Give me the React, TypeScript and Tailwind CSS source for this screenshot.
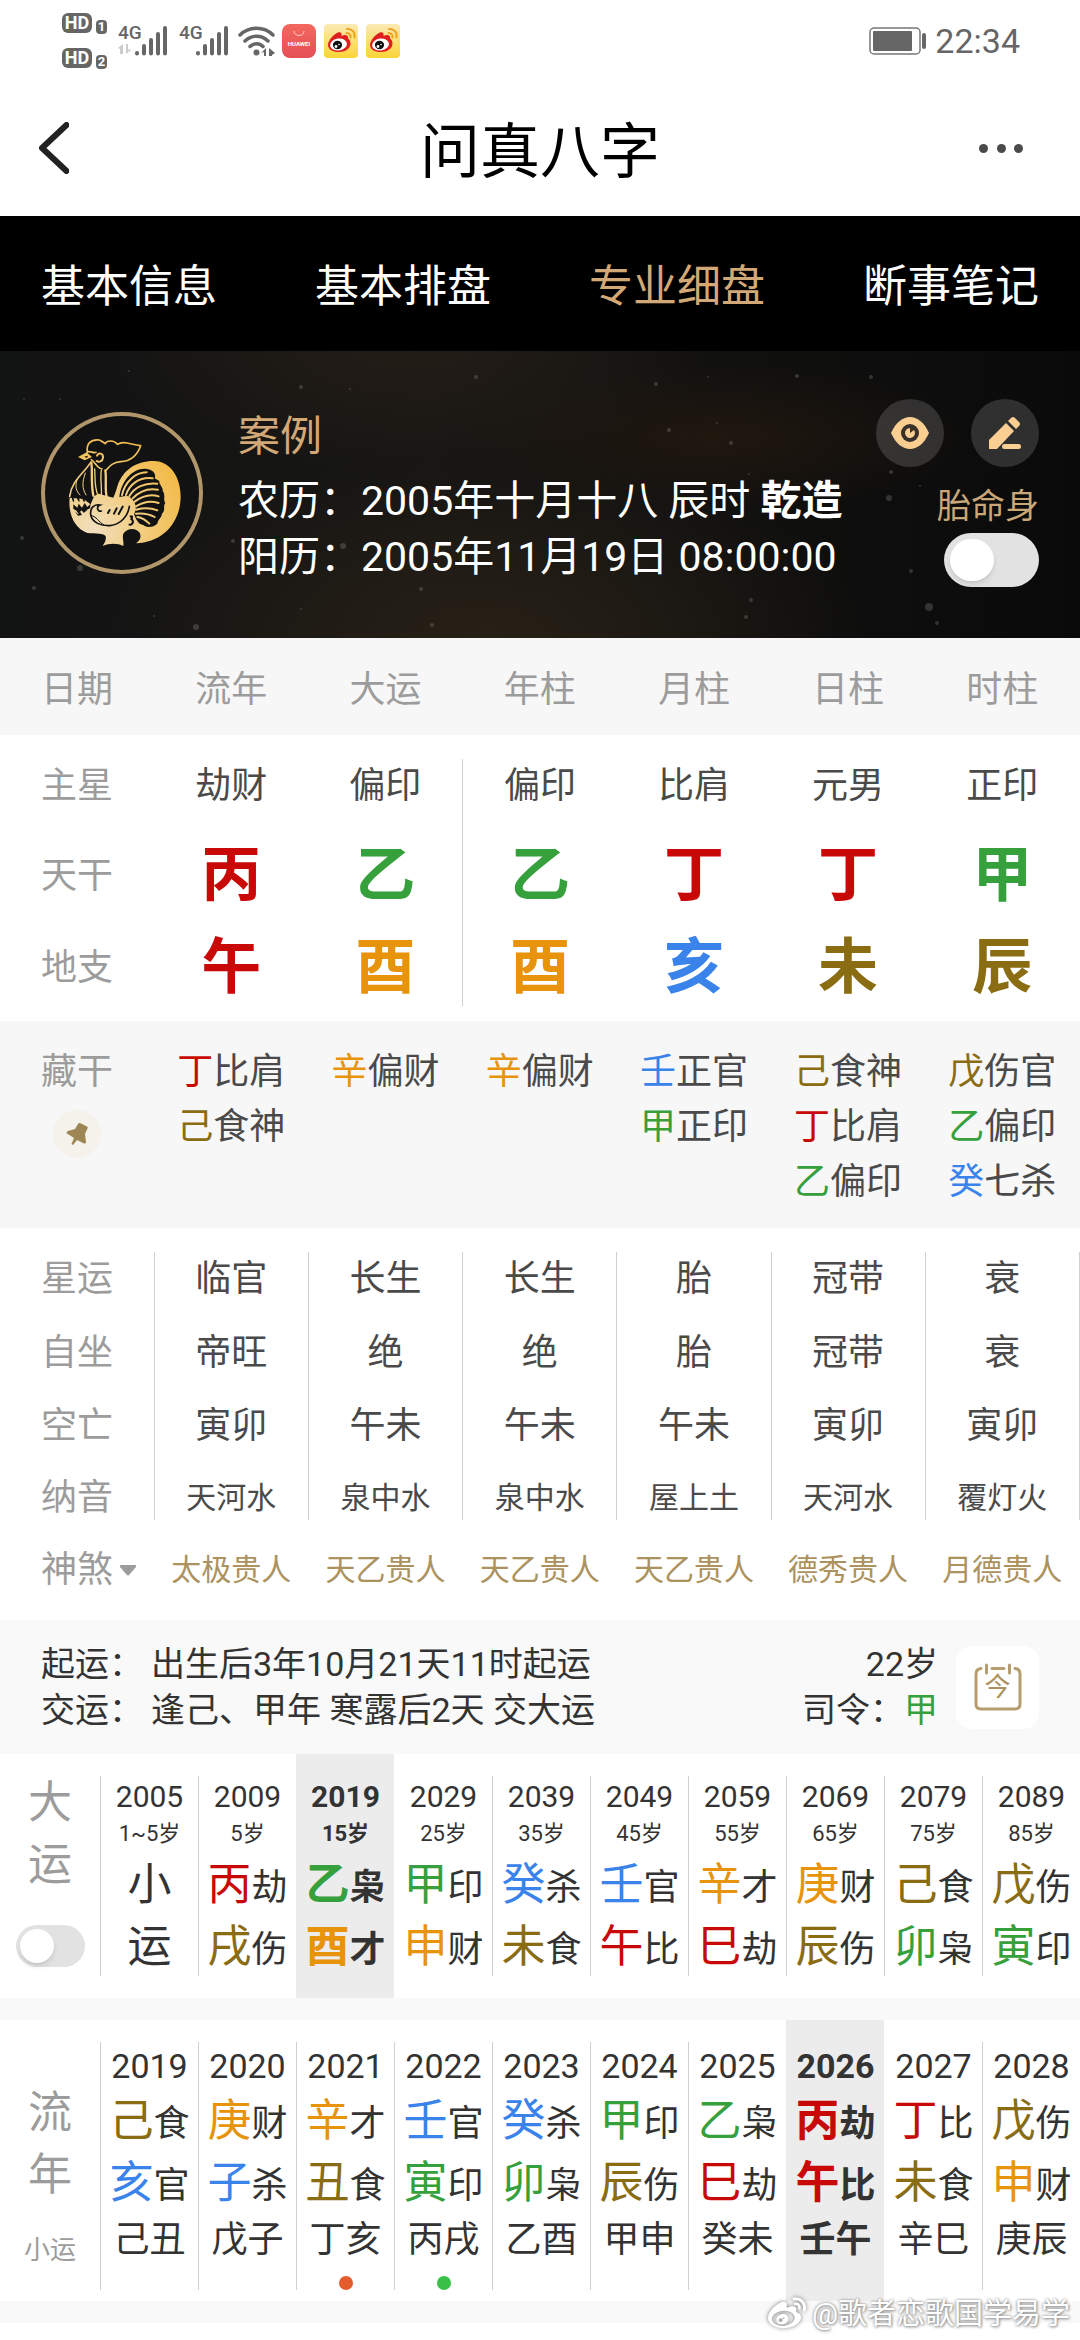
import React from "react";
import { FaWeibo } from "react-icons/fa";

const WOOD = "text-[#36a03c]";
const FIRE = "text-[#c90808]";
const EARTH = "text-[#8a6d12]";
const METAL = "text-[#e8930c]";
const WATER = "text-[#3a83ea]";

// stems and branches grouped by their element
const elements: [string, string][] = [
  ["甲乙寅卯", WOOD],
  ["丙丁巳午", FIRE],
  ["戊己辰戌丑未", EARTH],
  ["庚辛申酉", METAL],
  ["壬癸亥子", WATER],
];

const colorOf = (char: string) =>
  elements.find(([chars]) => chars.includes(char))?.[1] ?? "text-[#333333]";

const tabs = ["基本信息", "基本排盘", "专业细盘", "断事笔记"];

const pillars = [
  {
    name: "流年",
    star: "劫财",
    stem: "丙",
    branch: "午",
    hidden: ["丁比肩", "己食神"],
    fate: ["临官", "帝旺", "寅卯"],
    sound: "天河水",
    spirit: "太极贵人",
  },
  {
    name: "大运",
    star: "偏印",
    stem: "乙",
    branch: "酉",
    hidden: ["辛偏财"],
    fate: ["长生", "绝", "午未"],
    sound: "泉中水",
    spirit: "天乙贵人",
  },
  {
    name: "年柱",
    star: "偏印",
    stem: "乙",
    branch: "酉",
    hidden: ["辛偏财"],
    fate: ["长生", "绝", "午未"],
    sound: "泉中水",
    spirit: "天乙贵人",
  },
  {
    name: "月柱",
    star: "比肩",
    stem: "丁",
    branch: "亥",
    hidden: ["壬正官", "甲正印"],
    fate: ["胎", "胎", "午未"],
    sound: "屋上土",
    spirit: "天乙贵人",
  },
  {
    name: "日柱",
    star: "元男",
    stem: "丁",
    branch: "未",
    hidden: ["己食神", "丁比肩", "乙偏印"],
    fate: ["冠带", "冠带", "寅卯"],
    sound: "天河水",
    spirit: "德秀贵人",
  },
  {
    name: "时柱",
    star: "正印",
    stem: "甲",
    branch: "辰",
    hidden: ["戊伤官", "乙偏印", "癸七杀"],
    fate: ["衰", "衰", "寅卯"],
    sound: "覆灯火",
    spirit: "月德贵人",
  },
];

const decades = [
  { year: 2005, age: "1~5岁", top: "小", bottom: "运" },
  { year: 2009, age: "5岁", top: "丙劫", bottom: "戌伤" },
  { year: 2019, age: "15岁", top: "乙枭", bottom: "酉才", active: true },
  { year: 2029, age: "25岁", top: "甲印", bottom: "申财" },
  { year: 2039, age: "35岁", top: "癸杀", bottom: "未食" },
  { year: 2049, age: "45岁", top: "壬官", bottom: "午比" },
  { year: 2059, age: "55岁", top: "辛才", bottom: "巳劫" },
  { year: 2069, age: "65岁", top: "庚财", bottom: "辰伤" },
  { year: 2079, age: "75岁", top: "己食", bottom: "卯枭" },
  { year: 2089, age: "85岁", top: "戊伤", bottom: "寅印" },
];

const years = [
  { year: 2019, top: "己食", bottom: "亥官", minor: "己丑" },
  { year: 2020, top: "庚财", bottom: "子杀", minor: "戊子" },
  { year: 2021, top: "辛才", bottom: "丑食", minor: "丁亥", dot: "bg-[#e55c2c]" },
  { year: 2022, top: "壬官", bottom: "寅印", minor: "丙戌", dot: "bg-[#3abf48]" },
  { year: 2023, top: "癸杀", bottom: "卯枭", minor: "乙酉" },
  { year: 2024, top: "甲印", bottom: "辰伤", minor: "甲申" },
  { year: 2025, top: "乙枭", bottom: "巳劫", minor: "癸未" },
  { year: 2026, top: "丙劫", bottom: "午比", minor: "壬午", active: true },
  { year: 2027, top: "丁比", bottom: "未食", minor: "辛巳" },
  { year: 2028, top: "戊伤", bottom: "申财", minor: "庚辰" },
];

const Signal: React.FC<{ data?: boolean }> = ({ data }) => (
  <div className="relative h-8 w-[50px]">
    <span className="absolute left-0 top-0 text-[19px] leading-4 font-medium">4G</span>
    <svg viewBox="0 0 50 32" className="h-8 w-[50px]" fill="none" aria-hidden="true">
      <g stroke="#666666" strokeWidth="4" strokeLinecap="round">
        <path d="M19 28v.5M26 21v7.500M33 15v13.500M40 9v19.500M47 3v25.500" />
      </g>
      {data && <path d="M0 23l5-4v10H2v-5zM8 19v10l5-4-1-1-2 1v-6z" fill="#cccccc" />}
    </svg>
  </div>
);

const WeiboBadge: React.FC = () => (
  <svg viewBox="0 0 34 34" className="size-[34px]" aria-hidden="true">
    <defs>
      <linearGradient id="weibo-bg" x1="0" y1="0" x2="0" y2="1">
        <stop offset="0" stopColor="#fbeab4" />
        <stop offset="1" stopColor="#fbd536" />
      </linearGradient>
    </defs>
    <rect width="34" height="34" rx="4" fill="url(#weibo-bg)" />
    <path
      d="M4 21c0-5 6-11 10-12.500 3-1 4 1 3.500 3.500 3-1.500 7-1.500 6.500 2 0 1 2.500 1.500 2.500 5.500 0 5-5.500 8.500-11.500 8.500S4 25.500 4 21z"
      fill="#e01f1f"
    />
    <ellipse cx="14.500" cy="20.500" rx="8.500" ry="6" fill="#ffffff" transform="rotate(-8 14.500 20.500)" />
    <ellipse cx="13.500" cy="21" rx="4.600" ry="4.200" fill="#111111" />
    <circle cx="12" cy="22.500" r="1.400" fill="#ffffff" />
    <circle cx="15" cy="20.500" r=".8" fill="#ffffff" />
    <path
      d="M22.500 9c3 0 4.500 2 4 4.500M23 5c5-.5 8.500 3.500 7.500 8.500"
      fill="none"
      stroke="#eda223"
      strokeWidth="2"
      strokeLinecap="round"
    />
  </svg>
);

const StatusBar: React.FC = () => (
  <div className="flex h-20 items-start pl-[62px] pr-[60px] text-[#666666]">
    <div className="mt-[13px] flex flex-col gap-[15px]">
      {["1", "2"].map((sim) => (
        <div key={sim} className="flex h-5 items-start gap-1">
          <span className="w-[30px] rounded-md bg-[#666666] text-center text-[18px] leading-5 font-bold text-white">
            HD
          </span>
          <span className="mt-[7px] w-[11px] rounded-sm bg-[#666666] text-center text-[13px] leading-[14px] font-bold text-white">
            {sim}
          </span>
        </div>
      ))}
    </div>
    <div className="mt-6 ml-[11px] flex items-center">
      <div className="flex gap-[11px]">
        <Signal data />
        <Signal />
      </div>
      <svg viewBox="0 0 37 32" className="ml-[9px] h-8 w-[37px]" fill="none" aria-hidden="true">
        <g stroke="#666666" strokeWidth="3.500" strokeLinecap="round">
          <path d="M2 10C11 1 26 1 35 10M7 16c6.500-6.500 16.500-6.500 23 0M12 21.500c3.500-3.800 9.500-3.800 13 0" />
        </g>
        <circle cx="18.500" cy="27.500" r="3" fill="#666666" />
        <path d="M23 28l5-5v8h-2v-4zM31 23l6 5-3 2v1h-3z" fill="#666666" />
      </svg>
      <div className="ml-[7px] flex gap-2">
        <div className="flex size-[34px] flex-col items-center rounded-lg bg-linear-to-b from-[#f2685f] to-[#e44e55]">
          <svg viewBox="0 0 12 8" className="mt-1.5 h-2 w-3" fill="none" aria-hidden="true">
            <path d="M1 1c0 6 10 6 10 0" stroke="#ffc9c4" />
          </svg>
          <span className="mt-0.5 text-[6px] leading-[8px] font-bold text-white">HUAWEI</span>
        </div>
        <WeiboBadge />
        <WeiboBadge />
      </div>
    </div>
    <div className="mt-5 ml-auto flex items-center gap-2">
      <svg viewBox="0 0 58 28" className="h-7 w-[58px]" aria-hidden="true">
        <rect x="1" y="1" width="50" height="26" rx="4" fill="none" stroke="#777777" strokeWidth="1.500" />
        <rect x="4" y="4" width="39" height="20" rx="1" fill="#666666" />
        <rect x="53" y="6" width="4" height="16" rx="2" fill="#666666" />
      </svg>
      <span className="text-[34px] leading-[42px]">22:34</span>
    </div>
  </div>
);

const Rooster: React.FC = () => (
  <svg viewBox="33 39 486 486" className="size-[162px] shrink-0" fill="none" role="img" aria-label="鸡">
    <defs>
      <radialGradient id="gold" gradientUnits="userSpaceOnUse" cx="190" cy="390" r="290">
        <stop offset="0" stopColor="#f3dfc0" />
        <stop offset=".4" stopColor="#f1d08a" />
        <stop offset="1" stopColor="#f3bb49" />
      </radialGradient>
    </defs>
    <circle cx="276" cy="282" r="237" fill="#121212" stroke="#b0966a" strokeWidth="12" />
    {/* body and tail */}
    <path
      d="M119 296C114 345 133 388 172 402C198 405 222 402 227 412C230 424 222 434 218 441C238 432 262 432 280 441C282 428 276 414 280 404C290 388 315 384 328 400C336 414 330 424 318 433C395 430 452 375 452 290C450 222 412 186 372 186C315 186 280 215 264 256C258 275 256 284 250 296L228 290L206 284L192 292L182 316L160 300Z"
      fill="url(#gold)"
    />
    {/* comb and neck */}
    <g stroke="url(#gold)" strokeWidth="5" strokeLinejoin="round" strokeLinecap="round">
      <path d="M172 160C168 135 182 120 208 123C216 126 222 132 226 134C230 124 252 122 262 136C280 124 300 136 332 140C322 168 302 186 272 188C244 190 236 206 226 216" />
      <path d="M174 158C182 156 192 164 198 160M184 182C196 190 202 208 216 210" />
      <path d="M201 170C206 158 220 164 219 176C218 188 206 190 200 186" strokeWidth="6" />
      <path d="M182 190C160 225 125 245 119 292" />
      <path d="M184 190C188 220 182 250 190 290M226 214C230 240 224 266 230 294" strokeWidth="7" />
      <path d="M194 210C196 234 192 262 204 290M214 214C210 240 216 262 214 290" strokeWidth="4" />
      <path d="M142 240C134 262 138 276 150 288M166 222C156 250 156 268 168 288" strokeWidth="3" />
    </g>
    <path d="M144 174L170 160L186 174L164 184Z" fill="url(#gold)" />
    <path d="M162 173l12-3-3 7z" fill="#121212" />
    {/* breast scales */}
    <g fill="#121212">
      <path d="M126 290q8 8 6 20q-8-6-6-20zM142 288q8 8 6 22q-9-8-6-22zM158 290q8 6 6 20q-9-6-6-20zM174 288q8 8 6 20q-8-6-6-20z" />
      <path d="M130 316l12 10 4-12 10 12 8-14 8 12 10-10-2 14-12 6-6 8-8-8-8 10-8-10-8-4z" />
      <path d="M134 336l10 10 6-8 6 10-12 2zM162 334l10-4-4 8z" />
    </g>
    {/* wing */}
    <g stroke="#121212" strokeLinecap="round">
      <path
        d="M214 336C202 340 198 322 210 318C190 314 180 330 182 346C186 372 214 381 240 380C272 376 294 352 298 322"
        strokeWidth="5"
      />
      <path d="M234 342l5-9M252 344l8-16M266 345l12-22" strokeWidth="6" />
      <path d="M184 350C200 352 204 368 222 378" strokeWidth="3" />
    </g>
    {/* tail feathers */}
    <path
      d="M268 294C274 245 310 205 350 210C368 212 380 224 374 238L388 246C386 256 400 264 398 276C408 288 398 300 406 312C398 322 408 334 396 344C394 358 384 360 382 374C372 384 350 388 340 378C324 376 318 360 312 346C326 320 310 296 290 290Z"
      fill="#121212"
    />
    <g stroke="url(#gold)" strokeWidth="6" strokeLinecap="round">
      <path d="M276 288C284 250 315 220 350 220" />
      <path d="M288 288C298 255 330 232 368 238" />
      <path d="M298 292C312 265 345 250 382 254" />
      <path d="M308 298C325 280 352 266 384 272" />
      <path d="M314 308C338 290 360 284 386 292" />
      <path d="M318 322C340 308 362 304 386 312" />
      <path d="M318 332C340 326 362 326 382 334" />
      <path d="M318 344C338 342 356 344 374 354" />
      <path d="M322 354C334 356 346 362 358 374" />
    </g>
    <path d="M296 376C306 380 314 368 304 360C310 352 304 350 300 354" stroke="#121212" strokeWidth="6" />
  </svg>
);

const stars = [
  [60, 48, 1], [129, 20, 1], [301, 36, 2], [350, 38, 1], [476, 26, 2], [656, 33, 2], [708, 26, 1],
  [797, 25, 2], [871, 26, 2], [717, 72, 1], [669, 79, 2], [731, 92, 2], [749, 123, 1], [891, 121, 2],
  [889, 147, 3], [233, 190, 2], [343, 195, 3], [421, 238, 2], [751, 249, 2], [746, 266, 2],
  [929, 256, 4], [937, 272, 2], [920, 135, 1], [196, 276, 3], [154, 265, 1], [301, 258, 1],
  [80, 217, 3], [22, 187, 2], [34, 237, 2], [432, 274, 2], [1020, 148, 1], [911, 220, 2], [24, 48, 1],
];

const Profile: React.FC = () => (
  <section className="relative flex items-center bg-[radial-gradient(ellipse_at_38%_-5%,#241d17_0,transparent_32%),radial-gradient(ellipse_at_66%_30%,#20170f_0,transparent_26%),radial-gradient(ellipse_at_45%_100%,#272016_0,transparent_45%),linear-gradient(90deg,#121313,#171614_40%,#0a0a0a)] px-[41px] pt-12 pb-[51px]">
    <svg
      viewBox="0 0 1080 287"
      preserveAspectRatio="none"
      className="absolute inset-0 size-full"
      aria-hidden="true"
    >
      {stars.map(([x, y, r]) => (
        <circle key={`${x}-${y}`} cx={x} cy={y} r={r} fill="#ffffff" opacity=".16" />
      ))}
    </svg>
    <Rooster />
    <div className="relative ml-[35px] text-[41px] leading-[56px] text-white">
      <h2 className="text-[42px] leading-[72px] text-[#d2a876]">案例</h2>
      <p>
        农历：2005年十月十八 辰时 <b>乾造</b>
      </p>
      <p>阳历：2005年11月19日 08:00:00</p>
    </div>
    <div className="relative ml-auto flex flex-col items-end">
      <div className="flex gap-[27px]">
        <button type="button" aria-label="查看" className="grid size-[68px] place-items-center rounded-full bg-white/15">
          <svg viewBox="0 0 38 32" className="h-8 w-[38px]" aria-hidden="true">
            <path
              d="M0 16C5 5 12 0 19 0s14 5 19 16C33 27 26 32 19 32S5 27 0 16z"
              fill="#fbcf92"
            />
            <circle cx="19" cy="16" r="9" fill="#383029" />
            <path d="M19 11v5l4-3a5 5 0 1 1-4-2z" fill="#fbcf92" />
          </svg>
        </button>
        <button type="button" aria-label="编辑" className="grid size-[68px] place-items-center rounded-full bg-white/15">
          <svg viewBox="0 0 32 32" className="size-8" fill="#fbcf92" aria-hidden="true">
            <path d="M0 32V23L17 6l8 8L8 32zM19 4l3-3q2-2 4 0l4 4q2 2 0 4l-3 3z" />
            <rect x="13" y="27" width="19" height="5" rx="2.500" />
          </svg>
        </button>
      </div>
      <label htmlFor="tai-ming" className="mt-4 text-[34px] leading-[46px] text-[#c9a777]">
        胎命身
      </label>
      <input
        id="tai-ming"
        type="checkbox"
        className="mt-1 h-[54px] w-[95px] appearance-none rounded-full bg-[#e2e2e2] p-1.5 before:block before:h-[42px] before:w-[44px] before:rounded-full before:bg-white before:shadow-md"
      />
    </div>
  </section>
);

const Label: React.FC<{ children: React.ReactNode; className?: string }> = ({ children, className = "" }) => (
  <th scope="row" className={`pl-[41px] text-left font-normal text-[#9c9c9c] ${className}`}>
    {children}
  </th>
);

const Spacer: React.FC<{ className: string }> = ({ className }) => (
  <tr aria-hidden="true">
    <td colSpan={7} className={className} />
  </tr>
);

const PillarTable: React.FC = () => (
  <table className="w-full table-fixed border-collapse text-center text-[36px] leading-[40px] whitespace-nowrap text-[#4a4a4a]">
    <thead className="bg-[#f7f7f7] text-[#9c9c9c]">
      <tr className="h-[97px]">
        <th scope="col" className="pt-1.5 pl-[41px] text-left font-normal">
          日期
        </th>
        {pillars.map((p) => (
          <th key={p.name} scope="col" className="pt-1.5 font-normal">
            {p.name}
          </th>
        ))}
      </tr>
    </thead>
    <tbody>
      <Spacer className="h-6" />
      <tr className="h-[72px]">
        <Label className="pb-[18px]">主星</Label>
        {pillars.map((p, i) => (
          <td key={p.name} className={`pb-[18px] ${i === 2 ? "border-l border-[#d0d0d0]" : ""}`}>
            {p.star}
          </td>
        ))}
      </tr>
      <tr className="h-[90px]">
        <Label>天干</Label>
        {pillars.map((p, i) => (
          <td
            key={p.name}
            className={`text-[60px] leading-[70px] font-bold ${colorOf(p.stem)} ${i === 2 ? "border-l border-[#d0d0d0]" : ""}`}
          >
            {p.stem}
          </td>
        ))}
      </tr>
      <tr className="h-[85px]">
        <Label className="pt-2">地支</Label>
        {pillars.map((p, i) => (
          <td
            key={p.name}
            className={`pt-2 text-[60px] leading-[70px] font-bold ${colorOf(p.branch)} ${i === 2 ? "border-l border-[#d0d0d0]" : ""}`}
          >
            {p.branch}
          </td>
        ))}
      </tr>
      <Spacer className="h-[15px]" />
    </tbody>
    <tbody className="bg-[#f7f7f7]">
      <tr className="align-top leading-[55px]">
        <Label className="pt-6">
          <span className="block">藏干</span>
          <button
            type="button"
            aria-label="固定"
            className="ml-3 mt-2.5 grid size-12 place-items-center rounded-full bg-[#f5f1eb]"
          >
            <svg viewBox="0 0 22 22" className="size-[22px]" fill="#9e8654" aria-hidden="true">
              <path d="M12 1q1-1.500 3-.5l6 3q1 .5.500 2L19 11l1 8q0 2-2 1.500L11 17l-4 5-1.500-1L8 15l-7-4.500Q0 9 2 8l7-2z" />
            </svg>
          </button>
        </Label>
        {pillars.map((p) => (
          <td key={p.name} className="pt-6 pb-[18px]">
            {p.hidden.map((item) => (
              <p key={item}>
                <span className={colorOf(item[0])}>{item[0]}</span>
                {item.slice(1)}
              </p>
            ))}
          </td>
        ))}
      </tr>
    </tbody>
    <tbody>
      <Spacer className="h-6" />
      <tr className="h-16">
        <Label className="pb-2.5">星运</Label>
        {pillars.map((p) => (
          <td key={p.name} className="border-x border-[#d0d0d0] pb-2.5">
            {p.fate[0]}
          </td>
        ))}
      </tr>
      <tr className="h-[73px]">
        <Label>自坐</Label>
        {pillars.map((p) => (
          <td key={p.name} className="border-x border-[#d0d0d0]">
            {p.fate[1]}
          </td>
        ))}
      </tr>
      <tr className="h-[73px]">
        <Label>空亡</Label>
        {pillars.map((p) => (
          <td key={p.name} className="border-x border-[#d0d0d0]">
            {p.fate[2]}
          </td>
        ))}
      </tr>
      <tr className="h-[58px]">
        <Label className="pt-3.5">纳音</Label>
        {pillars.map((p) => (
          <td key={p.name} className="border-x border-[#d0d0d0] pt-3.5 text-[30px]">
            {p.sound}
          </td>
        ))}
      </tr>
      <tr className="h-[100px]">
        <Label>
          <button type="button" className="flex items-center gap-1.5">
            神煞
            <svg viewBox="0 0 16 10" className="h-[11px] w-[18px]" fill="#9c9c9c" aria-hidden="true">
              <path d="M1 0h14q1 .5 0 2L9 9q-1 1-2 0L1 2Q0 .5 1 0z" />
            </svg>
          </button>
        </Label>
        {pillars.map((p) => (
          <td key={p.name} className="text-[30px] text-[#ac925d]">
            {p.spirit}
          </td>
        ))}
      </tr>
    </tbody>
  </table>
);

const StartInfo: React.FC = () => (
  <section className="flex items-center bg-[#f9f9f9] px-[41px] py-[21px] text-[34px] leading-[46px] text-[#333333]">
    <dl className="grid grid-cols-[auto_auto] gap-x-2">
      <dt>起运：</dt>
      <dd>出生后3年10月21天11时起运</dd>
      <dt>交运：</dt>
      <dd>逢己、甲年 寒露后2天 交大运</dd>
    </dl>
    <div className="ml-auto text-right">
      <p>22岁</p>
      <p>
        司令：<span className={colorOf("甲")}>甲</span>
      </p>
    </div>
    <button
      type="button"
      className="relative ml-[18px] grid size-[83px] place-items-center rounded-2xl bg-white text-[#ac925d]"
    >
      <svg
        viewBox="0 0 48 48"
        className="absolute size-12"
        fill="none"
        stroke="#b59d70"
        strokeWidth="3"
        strokeLinecap="round"
        aria-hidden="true"
      >
        <path d="M7 5.500Q2 6 2 11v30q0 5 5 5h34q5 0 5-5V11q0-5-5-5.500M12.500 2v8M35.500 2v8M18 5.500h12" />
      </svg>
      <span className="relative text-[26px] leading-[30px]">今</span>
    </button>
  </section>
);

const Pair: React.FC<{ text: string }> = ({ text }) => (
  <span className="flex items-baseline justify-center text-[44px]">
    <span className={colorOf(text[0])}>{text[0]}</span>
    {text.length > 1 && <span className="text-[36px] leading-none">{text[1]}</span>}
  </span>
);

const DecadeRow: React.FC = () => (
  <section className="grid grid-cols-[100px_repeat(10,minmax(0,1fr))] text-[#333333]">
    <div className="flex flex-col items-center pt-[18px]">
      <h3 className="flex flex-col text-[44px] leading-[62px] text-[#9c9c9c]">
        <span>大</span>
        <span>运</span>
      </h3>
      <input
        type="checkbox"
        aria-label="大运"
        className="mt-[29px] h-[42px] w-[69px] appearance-none rounded-full bg-[#e2e2e2] p-1 before:block before:size-[34px] before:rounded-full before:bg-white before:shadow-md"
      />
    </div>
    {decades.map((d, i) => (
      <button
        key={d.year}
        type="button"
        className={`py-[22px] ${d.active ? "bg-[#ececec] font-bold" : ""}`}
      >
        <span
          className={`flex h-[200px] flex-col border-l ${d.active || decades[i - 1]?.active ? "border-transparent" : "border-[#d0d0d0]"}`}
        >
          <span className="text-[30px] leading-[42px]">{d.year}</span>
          <span className="mb-1 text-[22px] leading-8">{d.age}</span>
          <span className="block leading-[62px]">
            <Pair text={d.top} />
            <Pair text={d.bottom} />
          </span>
        </span>
      </button>
    ))}
  </section>
);

const YearRow: React.FC = () => (
  <section className="grid grid-cols-[100px_repeat(10,minmax(0,1fr))] text-[#333333]">
    <div className="flex flex-col items-center pt-[62px] text-[#9c9c9c]">
      <h3 className="flex flex-col text-[44px] leading-[62px]">
        <span>流</span>
        <span>年</span>
      </h3>
      <span className="mt-6 text-[26px] leading-[40px]">小运</span>
    </div>
    {years.map((y, i) => (
      <button
        key={y.year}
        type="button"
        className={`pt-[22px] pb-[11px] ${y.active ? "bg-[#ececec] font-bold" : ""}`}
      >
        <span
          className={`flex h-[248px] flex-col border-l ${y.active || years[i - 1]?.active ? "border-transparent" : "border-[#d0d0d0]"}`}
        >
          <span className="text-[34px] leading-[48px]">{y.year}</span>
          <span className="block leading-[62px]">
            <Pair text={y.top} />
            <Pair text={y.bottom} />
          </span>
          <span className="text-[36px] leading-[52px]">{y.minor}</span>
          {y.dot && <span className={`mx-auto mt-auto size-3.5 rounded-full ${y.dot}`} />}
        </span>
      </button>
    ))}
  </section>
);

const App: React.FC = () => {
  return (
    <div className="relative min-h-screen overflow-hidden bg-white font-['Roboto','Noto_Sans_CJK_SC',sans-serif]">
      <StatusBar />
      <header className="grid h-[136px] grid-cols-[1fr_auto_1fr] items-center px-[39px]">
        <button type="button" aria-label="返回" className="w-12">
          <svg viewBox="0 0 30 52" className="h-[52px] w-[30px]" fill="none" aria-hidden="true">
            <path
              d="M27.500 3L3 26l24.500 23"
              stroke="#222222"
              strokeWidth="6"
              strokeLinecap="round"
              strokeLinejoin="round"
            />
          </svg>
        </button>
        <h1 className="pt-2.5 text-[60px] leading-[72px] text-black">问真八字</h1>
        <button type="button" aria-label="更多" className="mr-4 flex w-12 justify-between justify-self-end px-0.5">
          <span className="size-[9px] rounded-full bg-[#4a4a4a]" />
          <span className="size-[9px] rounded-full bg-[#4a4a4a]" />
          <span className="size-[9px] rounded-full bg-[#4a4a4a]" />
        </button>
      </header>
      <nav className="flex h-[135px] items-center justify-between bg-black px-[41px] pt-1.5 text-[44px] leading-[60px]">
        {tabs.map((tab) => (
          <a key={tab} href="#" className={tab === "专业细盘" ? "text-[#d2a876]" : "text-white"}>
            {tab}
          </a>
        ))}
      </nav>
      <Profile />
      <PillarTable />
      <StartInfo />
      <DecadeRow />
      <div className="h-[22px] bg-[#f9f9f9]" />
      <YearRow />
      <div className="h-[22px] bg-[#f9f9f9]" />
      <div className="absolute right-2.5 bottom-1.5 flex items-center gap-1.5 text-[29px] leading-10 text-white [text-shadow:0_0_3px_#888,1px_1px_3px_#999]">
        <FaWeibo className="size-[38px] drop-shadow-[0_0_2px_#777]" />
        @歌者恋歌国学易学
      </div>
    </div>
  );
};

export default App;
